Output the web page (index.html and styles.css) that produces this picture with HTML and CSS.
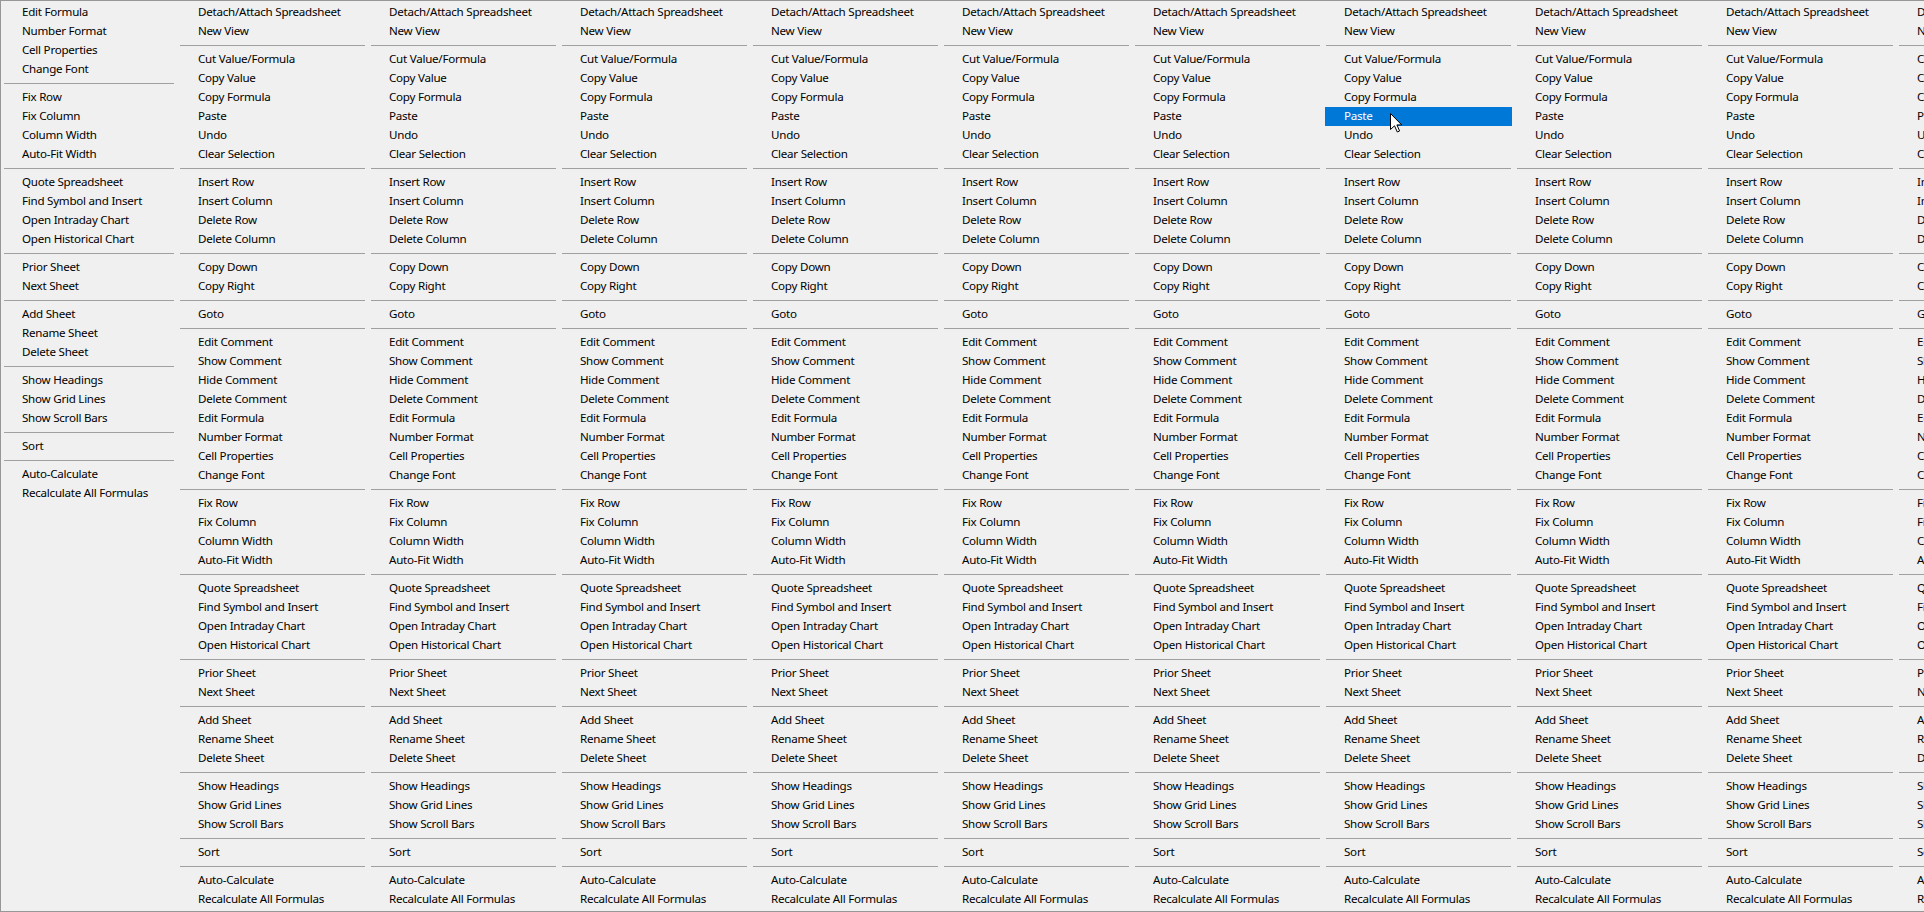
FILE: index.html
```html
<!DOCTYPE html>
<html>
<head>
<meta charset="utf-8">
<link rel="stylesheet" href="styles.css">
</head>
<body>
<div class="menu">
<ul class="col col-first">
<li>Edit Formula</li><li>Number Format</li><li>Cell Properties</li><li>Change Font</li><li class="sep"></li>
<li>Fix Row</li><li>Fix Column</li><li>Column Width</li><li>Auto-Fit Width</li><li class="sep"></li>
<li>Quote Spreadsheet</li><li>Find Symbol and Insert</li><li>Open Intraday Chart</li><li>Open Historical Chart</li><li class="sep"></li>
<li>Prior Sheet</li><li>Next Sheet</li><li class="sep"></li>
<li>Add Sheet</li><li>Rename Sheet</li><li>Delete Sheet</li><li class="sep"></li>
<li>Show Headings</li><li>Show Grid Lines</li><li>Show Scroll Bars</li><li class="sep"></li>
<li>Sort</li><li class="sep"></li>
<li>Auto-Calculate</li><li>Recalculate All Formulas</li>
</ul>
<ul class="col">
<li>Detach/Attach Spreadsheet</li><li>New View</li><li class="sep"></li>
<li>Cut Value/Formula</li><li>Copy Value</li><li>Copy Formula</li><li>Paste</li><li>Undo</li><li>Clear Selection</li><li class="sep"></li>
<li>Insert Row</li><li>Insert Column</li><li>Delete Row</li><li>Delete Column</li><li class="sep"></li>
<li>Copy Down</li><li>Copy Right</li><li class="sep"></li>
<li>Goto</li><li class="sep"></li>
<li>Edit Comment</li><li>Show Comment</li><li>Hide Comment</li><li>Delete Comment</li><li>Edit Formula</li><li>Number Format</li><li>Cell Properties</li><li>Change Font</li><li class="sep"></li>
<li>Fix Row</li><li>Fix Column</li><li>Column Width</li><li>Auto-Fit Width</li><li class="sep"></li>
<li>Quote Spreadsheet</li><li>Find Symbol and Insert</li><li>Open Intraday Chart</li><li>Open Historical Chart</li><li class="sep"></li>
<li>Prior Sheet</li><li>Next Sheet</li><li class="sep"></li>
<li>Add Sheet</li><li>Rename Sheet</li><li>Delete Sheet</li><li class="sep"></li>
<li>Show Headings</li><li>Show Grid Lines</li><li>Show Scroll Bars</li><li class="sep"></li>
<li>Sort</li><li class="sep"></li>
<li>Auto-Calculate</li><li>Recalculate All Formulas</li>
</ul>
<ul class="col">
<li>Detach/Attach Spreadsheet</li><li>New View</li><li class="sep"></li>
<li>Cut Value/Formula</li><li>Copy Value</li><li>Copy Formula</li><li>Paste</li><li>Undo</li><li>Clear Selection</li><li class="sep"></li>
<li>Insert Row</li><li>Insert Column</li><li>Delete Row</li><li>Delete Column</li><li class="sep"></li>
<li>Copy Down</li><li>Copy Right</li><li class="sep"></li>
<li>Goto</li><li class="sep"></li>
<li>Edit Comment</li><li>Show Comment</li><li>Hide Comment</li><li>Delete Comment</li><li>Edit Formula</li><li>Number Format</li><li>Cell Properties</li><li>Change Font</li><li class="sep"></li>
<li>Fix Row</li><li>Fix Column</li><li>Column Width</li><li>Auto-Fit Width</li><li class="sep"></li>
<li>Quote Spreadsheet</li><li>Find Symbol and Insert</li><li>Open Intraday Chart</li><li>Open Historical Chart</li><li class="sep"></li>
<li>Prior Sheet</li><li>Next Sheet</li><li class="sep"></li>
<li>Add Sheet</li><li>Rename Sheet</li><li>Delete Sheet</li><li class="sep"></li>
<li>Show Headings</li><li>Show Grid Lines</li><li>Show Scroll Bars</li><li class="sep"></li>
<li>Sort</li><li class="sep"></li>
<li>Auto-Calculate</li><li>Recalculate All Formulas</li>
</ul>
<ul class="col">
<li>Detach/Attach Spreadsheet</li><li>New View</li><li class="sep"></li>
<li>Cut Value/Formula</li><li>Copy Value</li><li>Copy Formula</li><li>Paste</li><li>Undo</li><li>Clear Selection</li><li class="sep"></li>
<li>Insert Row</li><li>Insert Column</li><li>Delete Row</li><li>Delete Column</li><li class="sep"></li>
<li>Copy Down</li><li>Copy Right</li><li class="sep"></li>
<li>Goto</li><li class="sep"></li>
<li>Edit Comment</li><li>Show Comment</li><li>Hide Comment</li><li>Delete Comment</li><li>Edit Formula</li><li>Number Format</li><li>Cell Properties</li><li>Change Font</li><li class="sep"></li>
<li>Fix Row</li><li>Fix Column</li><li>Column Width</li><li>Auto-Fit Width</li><li class="sep"></li>
<li>Quote Spreadsheet</li><li>Find Symbol and Insert</li><li>Open Intraday Chart</li><li>Open Historical Chart</li><li class="sep"></li>
<li>Prior Sheet</li><li>Next Sheet</li><li class="sep"></li>
<li>Add Sheet</li><li>Rename Sheet</li><li>Delete Sheet</li><li class="sep"></li>
<li>Show Headings</li><li>Show Grid Lines</li><li>Show Scroll Bars</li><li class="sep"></li>
<li>Sort</li><li class="sep"></li>
<li>Auto-Calculate</li><li>Recalculate All Formulas</li>
</ul>
<ul class="col">
<li>Detach/Attach Spreadsheet</li><li>New View</li><li class="sep"></li>
<li>Cut Value/Formula</li><li>Copy Value</li><li>Copy Formula</li><li>Paste</li><li>Undo</li><li>Clear Selection</li><li class="sep"></li>
<li>Insert Row</li><li>Insert Column</li><li>Delete Row</li><li>Delete Column</li><li class="sep"></li>
<li>Copy Down</li><li>Copy Right</li><li class="sep"></li>
<li>Goto</li><li class="sep"></li>
<li>Edit Comment</li><li>Show Comment</li><li>Hide Comment</li><li>Delete Comment</li><li>Edit Formula</li><li>Number Format</li><li>Cell Properties</li><li>Change Font</li><li class="sep"></li>
<li>Fix Row</li><li>Fix Column</li><li>Column Width</li><li>Auto-Fit Width</li><li class="sep"></li>
<li>Quote Spreadsheet</li><li>Find Symbol and Insert</li><li>Open Intraday Chart</li><li>Open Historical Chart</li><li class="sep"></li>
<li>Prior Sheet</li><li>Next Sheet</li><li class="sep"></li>
<li>Add Sheet</li><li>Rename Sheet</li><li>Delete Sheet</li><li class="sep"></li>
<li>Show Headings</li><li>Show Grid Lines</li><li>Show Scroll Bars</li><li class="sep"></li>
<li>Sort</li><li class="sep"></li>
<li>Auto-Calculate</li><li>Recalculate All Formulas</li>
</ul>
<ul class="col">
<li>Detach/Attach Spreadsheet</li><li>New View</li><li class="sep"></li>
<li>Cut Value/Formula</li><li>Copy Value</li><li>Copy Formula</li><li>Paste</li><li>Undo</li><li>Clear Selection</li><li class="sep"></li>
<li>Insert Row</li><li>Insert Column</li><li>Delete Row</li><li>Delete Column</li><li class="sep"></li>
<li>Copy Down</li><li>Copy Right</li><li class="sep"></li>
<li>Goto</li><li class="sep"></li>
<li>Edit Comment</li><li>Show Comment</li><li>Hide Comment</li><li>Delete Comment</li><li>Edit Formula</li><li>Number Format</li><li>Cell Properties</li><li>Change Font</li><li class="sep"></li>
<li>Fix Row</li><li>Fix Column</li><li>Column Width</li><li>Auto-Fit Width</li><li class="sep"></li>
<li>Quote Spreadsheet</li><li>Find Symbol and Insert</li><li>Open Intraday Chart</li><li>Open Historical Chart</li><li class="sep"></li>
<li>Prior Sheet</li><li>Next Sheet</li><li class="sep"></li>
<li>Add Sheet</li><li>Rename Sheet</li><li>Delete Sheet</li><li class="sep"></li>
<li>Show Headings</li><li>Show Grid Lines</li><li>Show Scroll Bars</li><li class="sep"></li>
<li>Sort</li><li class="sep"></li>
<li>Auto-Calculate</li><li>Recalculate All Formulas</li>
</ul>
<ul class="col">
<li>Detach/Attach Spreadsheet</li><li>New View</li><li class="sep"></li>
<li>Cut Value/Formula</li><li>Copy Value</li><li>Copy Formula</li><li>Paste</li><li>Undo</li><li>Clear Selection</li><li class="sep"></li>
<li>Insert Row</li><li>Insert Column</li><li>Delete Row</li><li>Delete Column</li><li class="sep"></li>
<li>Copy Down</li><li>Copy Right</li><li class="sep"></li>
<li>Goto</li><li class="sep"></li>
<li>Edit Comment</li><li>Show Comment</li><li>Hide Comment</li><li>Delete Comment</li><li>Edit Formula</li><li>Number Format</li><li>Cell Properties</li><li>Change Font</li><li class="sep"></li>
<li>Fix Row</li><li>Fix Column</li><li>Column Width</li><li>Auto-Fit Width</li><li class="sep"></li>
<li>Quote Spreadsheet</li><li>Find Symbol and Insert</li><li>Open Intraday Chart</li><li>Open Historical Chart</li><li class="sep"></li>
<li>Prior Sheet</li><li>Next Sheet</li><li class="sep"></li>
<li>Add Sheet</li><li>Rename Sheet</li><li>Delete Sheet</li><li class="sep"></li>
<li>Show Headings</li><li>Show Grid Lines</li><li>Show Scroll Bars</li><li class="sep"></li>
<li>Sort</li><li class="sep"></li>
<li>Auto-Calculate</li><li>Recalculate All Formulas</li>
</ul>
<ul class="col">
<li>Detach/Attach Spreadsheet</li><li>New View</li><li class="sep"></li>
<li>Cut Value/Formula</li><li>Copy Value</li><li>Copy Formula</li><li class="hot">Paste<svg class="cursor" width="13" height="20" viewBox="0 0 13 20"><polygon points="0.5,0.5 0.5,16.5 4.5,12.8 7.3,19 9.6,18 6.9,11.9 11.7,11.9" fill="#fff" stroke="#000" stroke-width="1"/></svg></li><li>Undo</li><li>Clear Selection</li><li class="sep"></li>
<li>Insert Row</li><li>Insert Column</li><li>Delete Row</li><li>Delete Column</li><li class="sep"></li>
<li>Copy Down</li><li>Copy Right</li><li class="sep"></li>
<li>Goto</li><li class="sep"></li>
<li>Edit Comment</li><li>Show Comment</li><li>Hide Comment</li><li>Delete Comment</li><li>Edit Formula</li><li>Number Format</li><li>Cell Properties</li><li>Change Font</li><li class="sep"></li>
<li>Fix Row</li><li>Fix Column</li><li>Column Width</li><li>Auto-Fit Width</li><li class="sep"></li>
<li>Quote Spreadsheet</li><li>Find Symbol and Insert</li><li>Open Intraday Chart</li><li>Open Historical Chart</li><li class="sep"></li>
<li>Prior Sheet</li><li>Next Sheet</li><li class="sep"></li>
<li>Add Sheet</li><li>Rename Sheet</li><li>Delete Sheet</li><li class="sep"></li>
<li>Show Headings</li><li>Show Grid Lines</li><li>Show Scroll Bars</li><li class="sep"></li>
<li>Sort</li><li class="sep"></li>
<li>Auto-Calculate</li><li>Recalculate All Formulas</li>
</ul>
<ul class="col">
<li>Detach/Attach Spreadsheet</li><li>New View</li><li class="sep"></li>
<li>Cut Value/Formula</li><li>Copy Value</li><li>Copy Formula</li><li>Paste</li><li>Undo</li><li>Clear Selection</li><li class="sep"></li>
<li>Insert Row</li><li>Insert Column</li><li>Delete Row</li><li>Delete Column</li><li class="sep"></li>
<li>Copy Down</li><li>Copy Right</li><li class="sep"></li>
<li>Goto</li><li class="sep"></li>
<li>Edit Comment</li><li>Show Comment</li><li>Hide Comment</li><li>Delete Comment</li><li>Edit Formula</li><li>Number Format</li><li>Cell Properties</li><li>Change Font</li><li class="sep"></li>
<li>Fix Row</li><li>Fix Column</li><li>Column Width</li><li>Auto-Fit Width</li><li class="sep"></li>
<li>Quote Spreadsheet</li><li>Find Symbol and Insert</li><li>Open Intraday Chart</li><li>Open Historical Chart</li><li class="sep"></li>
<li>Prior Sheet</li><li>Next Sheet</li><li class="sep"></li>
<li>Add Sheet</li><li>Rename Sheet</li><li>Delete Sheet</li><li class="sep"></li>
<li>Show Headings</li><li>Show Grid Lines</li><li>Show Scroll Bars</li><li class="sep"></li>
<li>Sort</li><li class="sep"></li>
<li>Auto-Calculate</li><li>Recalculate All Formulas</li>
</ul>
<ul class="col">
<li>Detach/Attach Spreadsheet</li><li>New View</li><li class="sep"></li>
<li>Cut Value/Formula</li><li>Copy Value</li><li>Copy Formula</li><li>Paste</li><li>Undo</li><li>Clear Selection</li><li class="sep"></li>
<li>Insert Row</li><li>Insert Column</li><li>Delete Row</li><li>Delete Column</li><li class="sep"></li>
<li>Copy Down</li><li>Copy Right</li><li class="sep"></li>
<li>Goto</li><li class="sep"></li>
<li>Edit Comment</li><li>Show Comment</li><li>Hide Comment</li><li>Delete Comment</li><li>Edit Formula</li><li>Number Format</li><li>Cell Properties</li><li>Change Font</li><li class="sep"></li>
<li>Fix Row</li><li>Fix Column</li><li>Column Width</li><li>Auto-Fit Width</li><li class="sep"></li>
<li>Quote Spreadsheet</li><li>Find Symbol and Insert</li><li>Open Intraday Chart</li><li>Open Historical Chart</li><li class="sep"></li>
<li>Prior Sheet</li><li>Next Sheet</li><li class="sep"></li>
<li>Add Sheet</li><li>Rename Sheet</li><li>Delete Sheet</li><li class="sep"></li>
<li>Show Headings</li><li>Show Grid Lines</li><li>Show Scroll Bars</li><li class="sep"></li>
<li>Sort</li><li class="sep"></li>
<li>Auto-Calculate</li><li>Recalculate All Formulas</li>
</ul>
<ul class="col">
<li>Detach/Attach Spreadsheet</li><li>New View</li><li class="sep"></li>
<li>Cut Value/Formula</li><li>Copy Value</li><li>Copy Formula</li><li>Paste</li><li>Undo</li><li>Clear Selection</li><li class="sep"></li>
<li>Insert Row</li><li>Insert Column</li><li>Delete Row</li><li>Delete Column</li><li class="sep"></li>
<li>Copy Down</li><li>Copy Right</li><li class="sep"></li>
<li>Goto</li><li class="sep"></li>
<li>Edit Comment</li><li>Show Comment</li><li>Hide Comment</li><li>Delete Comment</li><li>Edit Formula</li><li>Number Format</li><li>Cell Properties</li><li>Change Font</li><li class="sep"></li>
<li>Fix Row</li><li>Fix Column</li><li>Column Width</li><li>Auto-Fit Width</li><li class="sep"></li>
<li>Quote Spreadsheet</li><li>Find Symbol and Insert</li><li>Open Intraday Chart</li><li>Open Historical Chart</li><li class="sep"></li>
<li>Prior Sheet</li><li>Next Sheet</li><li class="sep"></li>
<li>Add Sheet</li><li>Rename Sheet</li><li>Delete Sheet</li><li class="sep"></li>
<li>Show Headings</li><li>Show Grid Lines</li><li>Show Scroll Bars</li><li class="sep"></li>
<li>Sort</li><li class="sep"></li>
<li>Auto-Calculate</li><li>Recalculate All Formulas</li>
</ul>
</div>
</body>
</html>
```
FILE: styles.css
```css
html {
  margin: 0;
  padding: 0;
  background: #f0f0f0;
}
body {
  margin: 0;
  padding: 0;
  width: 1924px;
  height: 912px;
  overflow: hidden;
  background: #f0f0f0;
}
.menu {
  display: flex;
  align-items: flex-start;
  box-sizing: border-box;
  height: 912px;
  width: max-content;
  padding: 2px 0 2px 0;
  border: 1px solid #979797;
  border-right: none;
  background: #f0f0f0;
  font-family: "Noto Sans", "Open Sans", sans-serif;
  font-size: 11.6px;
  letter-spacing: -0.25px;
  color: #000;
}
.col {
  list-style: none;
  margin: 0;
  padding: 0 2px;
  width: 187px;
  flex: none;
}
.col-first {
  width: 172px;
}
.col li {
  position: relative;
  height: 19px;
  line-height: 17px;
  padding-left: 19px;
  white-space: nowrap;
}
.col li.sep {
  height: 9px;
  padding: 0;
  margin: 0 1px;
  box-sizing: border-box;
  border-top: 4px solid transparent;
  background: linear-gradient(#a0a0a0, #a0a0a0) 0 0 / 100% 1px no-repeat;
  background-origin: padding-box;
}
.col li.hot {
  background: #0078d7;
  color: #fff;
}
.cursor {
  position: absolute;
  left: 65px;
  top: 6px;
}
```
